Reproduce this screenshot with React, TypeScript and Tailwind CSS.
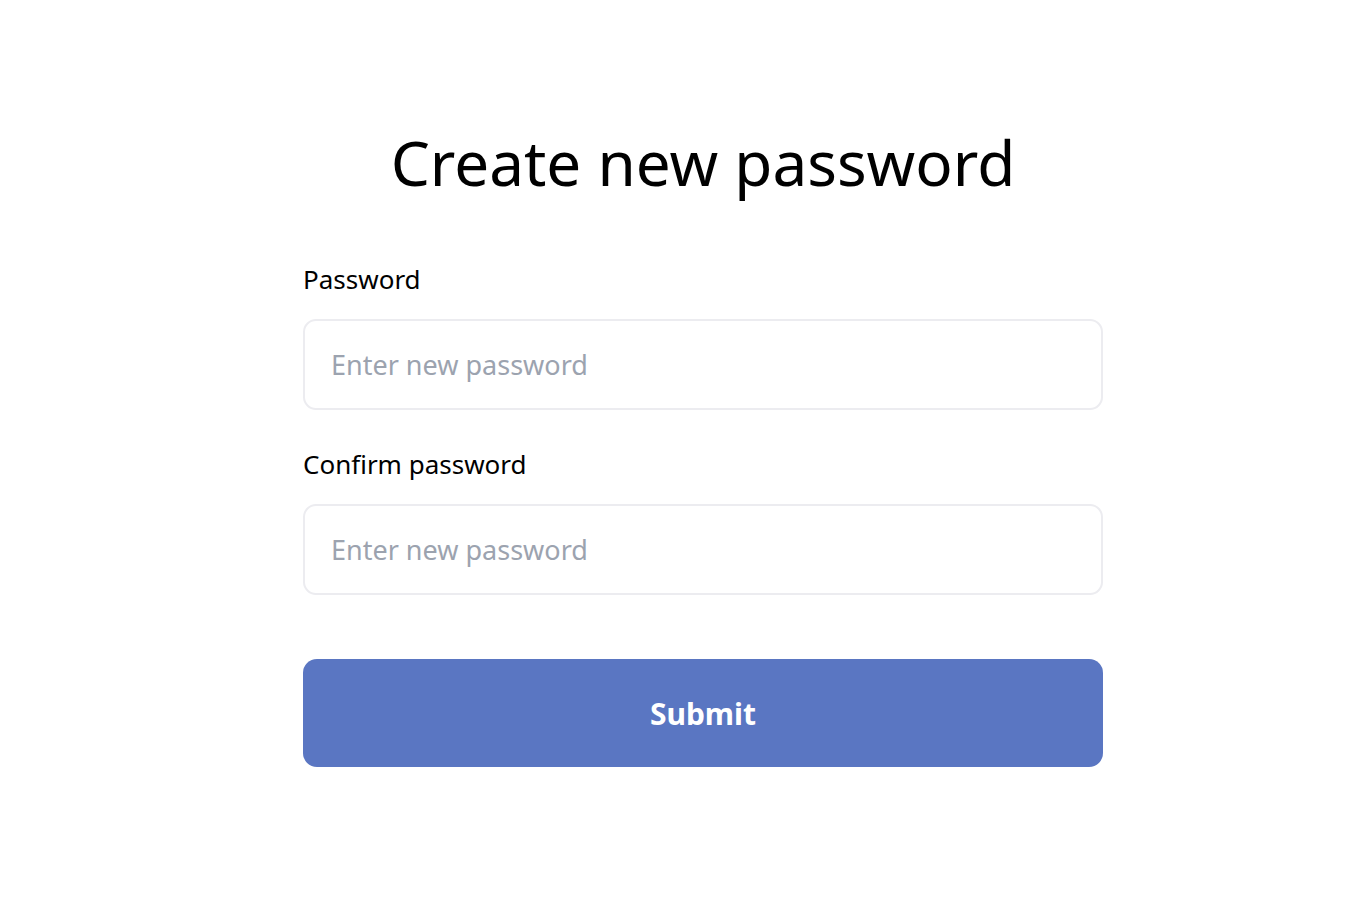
import React from "react";

export default function App() {
  return (
    <div
      className="min-h-[915px] w-full bg-white"
      style={{ fontFamily: '"Noto Sans", "Open Sans", sans-serif' }}
    >
      <div className="ml-[303px] w-[800px] pt-[122px]">
        <h1 className="text-center text-[62px] leading-[80px] text-black">
          Create new password
        </h1>
        <div className="mt-[60px] flex flex-col">
          <label className="text-[26px] leading-[34px] text-black">Password</label>
          <input
            type="password"
            placeholder="Enter new password"
            className="mt-[23px] h-[91px] w-full rounded-[13px] border-2 border-[#ececf0] px-[26px] text-[27px] text-black outline-none placeholder:text-[#9ca3af]"
          />
          <label className="mt-[37px] text-[26px] leading-[34px] text-black">
            Confirm password
          </label>
          <input
            type="password"
            placeholder="Enter new password"
            className="mt-[23px] h-[91px] w-full rounded-[13px] border-2 border-[#ececf0] px-[26px] text-[27px] text-black outline-none placeholder:text-[#9ca3af]"
          />
          <button className="mt-[64px] h-[108px] w-full rounded-[14px] bg-[#5a76c2] text-[30px] font-bold text-white">
            Submit
          </button>
        </div>
      </div>
    </div>
  );
}
